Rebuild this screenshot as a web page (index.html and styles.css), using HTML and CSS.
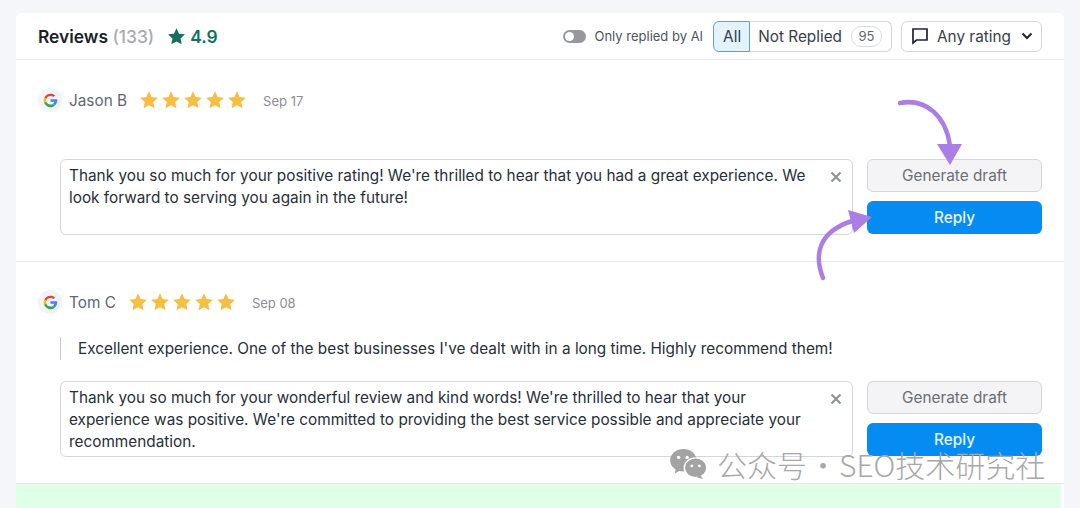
FILE: index.html
```html
<!DOCTYPE html>
<html>
<head>
<meta charset="utf-8" />
<link rel="stylesheet" href="styles.css">
<title>Reviews</title>
</head>
<body>
<svg width="0" height="0" class="defs">
  <symbol id="star" viewBox="0 0 24 24"><path d="M12 1.500l3.200 6.900 7.500.9-5.600 5.100 1.500 7.500L12 18.200l-6.600 3.700 1.500-7.500-5.600-5.100 7.500-.9z"/></symbol>
  <symbol id="google" viewBox="0 0 24 24">
    <path fill="#ea4335" d="M12 5.600c1.700 0 3.100.6 4.200 1.600l2.400-2.400C16.900 3.200 14.700 2.300 12 2.300 8.200 2.300 4.900 4.500 3.300 7.700l2.800 2.200C6.900 7.400 9.200 5.600 12 5.600z"/>
    <path fill="#4285f4" d="M21.500 12.200c0-.7-.1-1.300-.2-2H12v3.700h5.300c-.2 1.200-.9 2.300-2 3l2.700 2.100c1.700-1.500 3.500-3.900 3.500-6.800z"/>
    <path fill="#fbbc05" d="M6.100 14.100c-.4-1.300-.4-2.900 0-4.200L3.300 7.700c-1.300 2.600-1.300 6 0 8.600z"/>
    <path fill="#34a853" d="M12 21.700c2.600 0 4.800-.9 6-2.700l-2.700-2.100c-.8.500-1.900.9-3.300.9-2.800 0-5.100-1.800-5.900-4.300l-2.800 2.200c1.600 3.500 4.900 6 8.700 6z"/>
  </symbol>
  <symbol id="cross" viewBox="0 0 12 12"><path d="M1.500 1.500l9 9M10.500 1.500l-9 9" fill="none" stroke="#8f9298" stroke-width="2.200"/></symbol>
</svg>

<div class="card">
  <div class="top">
    <div class="title">Reviews <span class="count">(133)</span></div>
    <div class="score"><svg class="score-star"><use href="#star"/></svg>4.9</div>
    <div class="filters">
      <span class="toggle"><i></i></span>
      <span class="toggle-label">Only replied by AI</span>
      <div class="tabs">
        <span class="tab tab-on">All</span>
        <span class="tab">Not Replied <b class="pill">95</b></span>
      </div>
      <div class="rating">
        <svg width="18" height="18" viewBox="0 0 18 18" fill="none" stroke="#1f2430" stroke-width="1.700"><path d="M2 2h14v11H5.500L2 16z"/></svg>
        <span>Any rating</span>
        <svg width="12" height="8" viewBox="0 0 12 8" fill="none" stroke="#1f2430" stroke-width="2"><path d="M1.500 1.500L6 6l4.500-4.500"/></svg>
      </div>
    </div>
  </div>

  <div class="review review-first">
    <div class="head">
      <span class="gbadge"><svg><use href="#google"/></svg></span>
      <span class="name">Jason B</span>
      <span class="stars"><svg><use href="#star"/></svg><svg><use href="#star"/></svg><svg><use href="#star"/></svg><svg><use href="#star"/></svg><svg><use href="#star"/></svg></span>
      <span class="date">Sep 17</span>
    </div>
    <div class="answer">
      <div class="box">Thank you so much for your positive rating! We're thrilled to hear that you had a great experience. We look forward to serving you again in the future!<svg class="x"><use href="#cross"/></svg></div>
      <div class="btns">
        <span class="btn btn-grey">Generate draft</span>
        <span class="btn btn-blue">Reply</span>
      </div>
    </div>
  </div>

  <div class="review review-second">
    <div class="head">
      <span class="gbadge"><svg><use href="#google"/></svg></span>
      <span class="name">Tom C</span>
      <span class="stars"><svg><use href="#star"/></svg><svg><use href="#star"/></svg><svg><use href="#star"/></svg><svg><use href="#star"/></svg><svg><use href="#star"/></svg></span>
      <span class="date">Sep 08</span>
    </div>
    <div class="quote">Excellent experience. One of the best businesses I've dealt with in a long time. Highly recommend them!</div>
    <div class="answer">
      <div class="box">Thank you so much for your wonderful review and kind words! We're thrilled to hear that your experience was positive. We're committed to providing the best service possible and appreciate your recommendation.<svg class="x"><use href="#cross"/></svg></div>
      <div class="btns">
        <span class="btn btn-grey">Generate draft</span>
        <span class="btn btn-blue">Reply</span>
      </div>
    </div>
  </div>

  <div class="green"></div>
</div>

<!-- annotation arrows over the card -->
<svg class="arrows" width="1080" height="508" viewBox="0 0 1080 508" fill="none">
  <path d="M900 103C926 98 946 116 950 146" stroke="#ab7ee6" stroke-width="4.500" stroke-linecap="round"/>
  <path d="M937 144h25l-12 21z" fill="#ab7ee6"/>
  <path d="M823 278C814 255 818 232 852 221" stroke="#ab7ee6" stroke-width="4.500" stroke-linecap="round"/>
  <path d="M848 210l24 7-18 16z" fill="#ab7ee6"/>
</svg>

<div class="mark">
  <svg width="40" height="32" viewBox="0 0 42 34">
    <ellipse cx="15" cy="13" rx="14" ry="12" fill="#a3a3a3"/>
    <path d="M7 21l-1 6 7-4z" fill="#a3a3a3"/>
    <ellipse cx="28" cy="21" rx="12" ry="10.500" fill="#a3a3a3" stroke="#fff" stroke-width="1.500"/>
    <path d="M33 29l3 4-7-2z" fill="#a3a3a3"/>
    <circle cx="10" cy="10" r="1.800" fill="#fff"/><circle cx="19" cy="10" r="1.800" fill="#fff"/>
    <circle cx="24" cy="19" r="1.500" fill="#fff"/><circle cx="32" cy="19" r="1.500" fill="#fff"/>
  </svg>
  <span class="mark-text">公众号<span class="mark-dot">·</span>SEO技术研究社</span>
</div>
</body>
</html>
```

FILE: styles.css
```css
*{margin:0;padding:0;box-sizing:border-box;}
html,body{height:508px;overflow:hidden;}
body{background:#f4f6fa;font-family:Inter,"Liberation Sans",sans-serif;color:#2a2e37;padding:13px 16px 0;position:relative;}
.defs{position:absolute;}

.card{background:#fff;border-radius:6px 6px 0 0;height:495px;display:flex;flex-direction:column;}

.top{height:47px;border-bottom:1px solid #e6e8ec;display:flex;align-items:center;padding:0 22px;}
.title{font-size:17.400px;font-weight:600;color:#1c1f26;}
.count{color:#a9abb1;font-weight:500;}
.score{display:flex;align-items:center;gap:4px;margin-left:13px;font-size:17.400px;font-weight:600;color:#16705f;}
.score-star{width:19px;height:19px;fill:#12705c;}
.filters{margin-left:auto;display:flex;align-items:center;}
.toggle{width:23px;height:13px;border-radius:7px;background:#96989c;position:relative;display:block;}
.toggle i{position:absolute;left:2px;top:2px;width:9px;height:9px;border-radius:50%;background:#fff;}
.toggle-label{font-size:13px;color:#50545c;margin:0 10px 0 8px;white-space:nowrap;}
.tabs{display:flex;height:31px;font-size:15.350px;color:#3a3e47;}
.tab{display:flex;align-items:center;gap:9px;padding:0 9px 0 8px;border:1px solid #d3d6dc;border-left:none;border-radius:0 6px 6px 0;white-space:nowrap;}
.tab-on{background:#e3f3fb;border:1px solid #64a0ba;border-radius:6px 0 0 6px;color:#2f3c48;padding:0 8px 0 9px;}
.pill{font-weight:400;font-size:13px;color:#63676e;border:1px solid #d9dbe0;border-radius:10px;height:21px;width:31px;display:flex;align-items:center;justify-content:center;}
.rating{margin-left:9px;height:31px;width:141px;border:1px solid #d3d6dc;border-radius:6px;display:flex;align-items:center;gap:8px;padding:0 9px;font-size:15.350px;color:#3a3e47;white-space:nowrap;}
.rating svg{flex:none;}
.rating svg:last-child{margin-left:2px;}

.review{padding:0 22px;border-bottom:1px solid #e6e8ec;}
.review-first{height:202px;padding-top:28px;}
.review-second{height:222px;padding-top:28px;}

.head{display:flex;align-items:center;height:24px;}
.gbadge{width:24px;height:24px;border-radius:50%;background:#f1f3f6;display:flex;align-items:center;justify-content:center;}
.gbadge svg{width:17px;height:17px;}
.name{font-size:15.350px;color:#63676e;margin-left:7px;}
.stars{display:flex;gap:2px;margin-left:12px;}
.stars svg{width:20px;height:20px;fill:#f4bf42;}
.date{font-size:13px;color:#8b8e95;margin-left:16px;margin-top:2px;}

.answer{display:flex;gap:14px;padding-left:22px;margin-top:47px;}
.review-second .answer{margin-top:21px;}
.box{width:793px;height:76px;border:1px solid #d3d6dc;border-radius:6px;padding:5px 40px 0 8px;font-size:15.350px;line-height:22px;color:#2a2e37;position:relative;}
.x{position:absolute;right:10px;top:11px;width:12px;height:12px;}
.btns{width:175px;display:flex;flex-direction:column;gap:9px;}
.btn{height:33px;border-radius:6px;display:flex;align-items:center;justify-content:center;font-size:15.350px;}
.btn-grey{background:#f4f4f6;border:1px solid #d3d6dc;color:#6a6d74;}
.btn-blue{background:#058cf2;color:#e6f4fe;font-weight:500;}

.quote{margin:23px 0 0 22px;border-left:1px solid #c9ccd2;padding-left:17px;height:23px;font-size:15.350px;line-height:23px;color:#2a2e37;}

.green{flex:1;background:#dfffe8;margin-right:3px;}

.arrows{position:absolute;left:0;top:0;}
.mark{position:absolute;left:669px;top:448px;display:flex;align-items:center;gap:8px;font-family:"Noto Sans CJK SC","Noto Sans",sans-serif;font-weight:300;font-size:30px;color:#a8a8a8;line-height:32px;white-space:nowrap;}
.mark-dot{margin:0 1px;}
```
